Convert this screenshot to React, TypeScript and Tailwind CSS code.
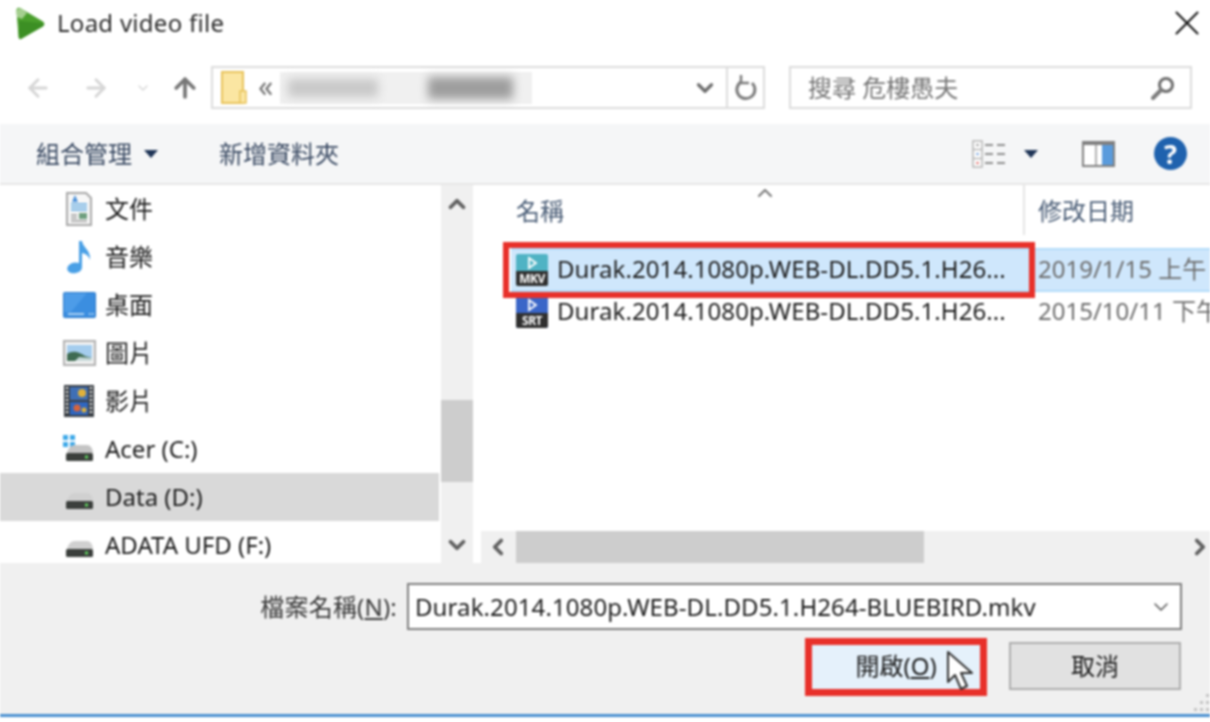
import { ArrowLeft, ArrowRight, ArrowUp, ChevronDown, ChevronUp, ChevronLeft, ChevronRight, X } from 'lucide-react';

function AppLogo() {
  return (
    <svg width="32" height="34" viewBox="0 0 32 34">
      <path d="M3 3 L5 30 Q5 33 8 31 L29 19 Q31 17 29 15 L7 2 Q3 0 3 3Z" fill="#4a9f2c" stroke="#4a9f2c" strokeLinejoin="round" />
      <path d="M5 14 L28 16 Q31 17 29 19 L8 31 Q5 33 5 30Z" fill="#3c8f24" />
      <path d="M2 3 L7 1 L13 6 L8 12 L3 10Z" fill="#a5cf8f" />
    </svg>
  );
}

function FolderIcon() {
  return (
    <svg width="26" height="34" viewBox="0 0 26 34">
      <rect x="1" y="1" width="21" height="31" fill="#fbe6a2" stroke="#e8c35c" strokeWidth="2" />
      <rect x="19" y="20" width="6" height="12" fill="#fbe6a2" stroke="#e8c35c" strokeWidth="1.5" />
    </svg>
  );
}

function RefreshIcon() {
  return (
    <svg width="24" height="28" viewBox="0 0 24 28" fill="none" stroke="#7d7d7d" strokeWidth="3">
      <path d="M7 8 A9 9 0 1 0 18 9" />
      <path d="M7 1 L7 9 L15 9" strokeWidth="2.5" />
    </svg>
  );
}

function SearchIcon() {
  return (
    <svg width="26" height="26" viewBox="0 0 26 26" fill="none">
      <circle cx="16" cy="10" r="6.5" stroke="#6e6e6e" strokeWidth="3" />
      <path d="M11 15 L3 23" stroke="#7d7d7d" strokeWidth="4" strokeLinecap="round" />
    </svg>
  );
}

function ViewIcon() {
  return (
    <svg width="34" height="28" viewBox="0 0 34 28">
      <rect x="1" y="1" width="9" height="26" fill="#fff" stroke="#b5b5b5" strokeWidth="1.5" />
      <path d="M1 9.5H10M1 18.5H10" stroke="#b5b5b5" strokeWidth="1.5" />
      <rect x="4.5" y="4" width="2" height="2" fill="#888" />
      <rect x="4.5" y="13" width="2" height="2" fill="#5b8fd6" />
      <rect x="4.5" y="22" width="2" height="2" fill="#d9534f" />
      <path d="M13 5H21M25 5H33M13 14H21M25 14H33M13 23H21M25 23H33" stroke="#8d8d8d" strokeWidth="2" />
    </svg>
  );
}

function PaneIcon() {
  return (
    <svg width="33" height="26" viewBox="0 0 33 26">
      <rect x="1" y="1" width="31" height="24" fill="#fff" stroke="#808080" strokeWidth="2" />
      <rect x="1" y="1" width="31" height="3" fill="#808080" />
      <rect x="13" y="4" width="2" height="20" fill="#b0b0b0" />
      <rect x="20" y="4" width="11" height="20" fill="#5a9bdc" />
    </svg>
  );
}

function HelpIcon() {
  return (
    <div className="w-[33px] h-[33px] rounded-full bg-[#1f62ae] flex items-center justify-center text-white text-[27px] font-bold leading-none">?</div>
  );
}

function Caret() {
  return <div className="w-0 h-0 border-l-[7px] border-r-[7px] border-t-[8px] border-l-transparent border-r-transparent border-t-[#1f3557]" />;
}

function DocIcon() {
  return (
    <svg width="26" height="34" viewBox="0 0 26 34">
      <path d="M1 1H20L25 6V33H1Z" fill="#f7f7f7" stroke="#a8a8a8" strokeWidth="2" />
      <path d="M6 10L9 3L12 10Z" fill="#4a90d9" />
      <path d="M5 12H21M5 15H21M5 18H21" stroke="#5aa5e0" strokeWidth="1.5" />
      <rect x="13" y="21" width="8" height="6" fill="#6f9f7f" />
      <path d="M5 23H11M5 26H11M5 29H21" stroke="#9a9a9a" strokeWidth="1.5" />
    </svg>
  );
}

function MusicIcon() {
  return (
    <svg width="26" height="34" viewBox="0 0 26 34">
      <path d="M13 1 L16 1 C17 8 25 10 24 20 C23 16 20 14 16 13 L16 27 C16 32 10 34 5 33 C1 32 0 28 3 25 C6 22 10 22 13 23Z" fill="#4aa0e6" />
    </svg>
  );
}

function DesktopIcon() {
  return (
    <svg width="33" height="26" viewBox="0 0 33 26">
      <rect x="0.5" y="0.5" width="32" height="25" rx="1" fill="#3b8ee0" stroke="#2a78c8" />
      <path d="M1 1H24L8 20H1Z" fill="#4d9ce8" />
      <path d="M5 22H21" stroke="#cfe6fa" strokeWidth="1.5" />
      <path d="M26 22H27.5M29 22H30.5" stroke="#e8f3fc" strokeWidth="1.5" />
    </svg>
  );
}

function PictureIcon() {
  return (
    <svg width="33" height="26" viewBox="0 0 33 26">
      <rect x="1" y="1" width="31" height="24" fill="#f3f3f3" stroke="#b0b0b0" strokeWidth="2" />
      <rect x="4" y="5" width="25" height="16" fill="#a5cdee" />
      <path d="M4 14 C10 10 16 12 22 16 L29 18 V21 H4Z" fill="#3f6b52" />
      <path d="M16 17 L29 18 V21 H12Z" fill="#c6d8d8" />
    </svg>
  );
}

function FilmIcon() {
  return (
    <svg width="30" height="32" viewBox="0 0 30 32">
      <rect x="0" y="0" width="30" height="32" fill="#3a3f45" />
      <path d="M3 2V30M27 2V30" stroke="#e5e5e5" strokeWidth="2.5" strokeDasharray="2 2" />
      <rect x="6" y="2" width="18" height="13" fill="#3f6fb5" />
      <rect x="6" y="17" width="18" height="13" fill="#2f66c0" />
      <circle cx="18" cy="8" r="4" fill="#e0b13a" />
      <circle cx="13" cy="23" r="3.5" fill="#d8643a" />
      <circle cx="20" cy="25" r="2.5" fill="#e0b13a" />
    </svg>
  );
}

function DriveIcon({ windows = false }: { windows?: boolean }) {
  return (
    <svg width="32" height="28" viewBox="0 0 32 28">
      {windows && (
        <g fill="#3fa9e8">
          <rect x="0" y="0" width="5" height="5" />
          <rect x="7" y="0" width="5" height="5" />
          <rect x="0" y="7" width="5" height="5" />
          <rect x="7" y="7" width="5" height="5" />
        </g>
      )}
      <path d="M4 18 Q6 10 12 10 H24 Q29 10 30 18Z" fill={windows ? '#c4c4c4' : '#d0d0d0'} />
      <rect x="3" y="18" width="27" height="8" rx="1.5" fill="#3b3f3c" />
      <rect x="22" y="20.5" width="3" height="3" fill="#5fcf5f" />
    </svg>
  );
}

function VideoFileIcon({ label, color }: { label: string; color: string }) {
  return (
    <div className="w-[32px] h-[32px] rounded-[2px] overflow-hidden flex flex-col shrink-0" style={{ backgroundColor: color }}>
      <div className="h-[17px] flex items-center justify-center">
        <svg width="11" height="14" viewBox="0 0 11 14" fill="none" stroke="#fff" strokeWidth="1.8">
          <path d="M2 2 L9 7 L2 12Z" />
        </svg>
      </div>
      <div className="h-[15px] bg-[#2f2f2f] text-white text-[12px] font-bold leading-[15px] text-center tracking-[-0.5px]">{label}</div>
    </div>
  );
}

function Cursor() {
  return (
    <svg width="30" height="42" viewBox="0 0 30 42">
      <path d="M2 2 L2 32 L9 25 L15 39 L21 36 L15 23 L26 23Z" fill="#fff" stroke="#333" strokeWidth="2" strokeLinejoin="round" />
    </svg>
  );
}

function ResizeGrip() {
  return (
    <svg width="16" height="18" viewBox="0 0 16 18" fill="#c4c4c4">
      <rect x="12" y="0" width="3" height="3" />
      <rect x="6" y="7" width="3" height="3" />
      <rect x="12" y="7" width="3" height="3" />
      <rect x="0" y="14" width="3" height="3" />
      <rect x="6" y="14" width="3" height="3" />
      <rect x="12" y="14" width="3" height="3" />
    </svg>
  );
}

const navItems = [
  { icon: <DocIcon />, label: '文件' },
  { icon: <MusicIcon />, label: '音樂' },
  { icon: <DesktopIcon />, label: '桌面' },
  { icon: <PictureIcon />, label: '圖片' },
  { icon: <FilmIcon />, label: '影片' },
  { icon: <DriveIcon windows />, label: 'Acer (C:)' },
  { icon: <DriveIcon />, label: 'Data (D:)', active: true },
  { icon: <DriveIcon />, label: 'ADATA UFD (F:)' },
];

const longName = 'Durak.2014.1080p.WEB-DL.DD5.1.H26...';

export default function App() {
  return (
    <div className="relative w-[1210px] h-[722px] overflow-hidden bg-white text-[24px] text-[#1c1c1c] blur-[0.8px] font-['Noto_Sans','Noto_Sans_CJK_TC',sans-serif]">
      {/* Title bar */}
      <div className="h-[48px] flex items-center pl-[14px] pr-[2px]">
        <AppLogo />
        <span className="ml-[11px] -mt-[3px] text-[#2b2b2b] tracking-[0.27px]">Load video file</span>
        <X className="ml-auto -mt-[2px] w-[42px] h-[42px] text-[#1a1a1a]" strokeWidth={1.2} />
      </div>

      {/* Navigation row */}
      <div className="h-[76px] flex items-start pt-[18px] pl-[24px]">
        <div className="flex items-center h-[43px] w-[187px] text-[#d6d6d6]">
          <ArrowLeft className="w-[28px] h-[28px]" strokeWidth={2.5} />
          <ArrowRight className="ml-[30px] w-[28px] h-[28px]" strokeWidth={2.5} />
          <ChevronDown className="ml-[25px] w-[16px] h-[16px]" strokeWidth={2} />
          <ArrowUp className="ml-[19px] w-[30px] h-[30px] text-[#777777]" strokeWidth={3} />
        </div>
        <div className="w-[554px] h-[43px] border-2 border-[#dcdcdc] flex items-center pl-[8px]">
          <FolderIcon />
          <span className="ml-[11px] -mt-[4px] text-[#777777] text-[30px] leading-none">«</span>
          <div className="ml-[7px] w-[252px] h-[32px] flex items-center bg-[#f0f0f0]">
            <div className="ml-[8px] w-[90px] h-[18px] bg-[#c8c8c8] blur-[5px]" />
            <div className="ml-[50px] w-[85px] h-[22px] bg-[#9d9d9d] blur-[5px]" />
          </div>
          <ChevronDown className="ml-auto mr-[8px] w-[26px] h-[26px] text-[#6e6e6e]" strokeWidth={3} />
          <div className="w-[37px] h-full border-l-2 border-[#dcdcdc] flex items-center justify-center">
            <RefreshIcon />
          </div>
        </div>
        <div className="ml-[24px] w-[403px] h-[43px] border-2 border-[#dcdcdc] flex items-center pl-[17px] pr-[14px] text-[#777777]">
          <span>搜尋 危樓愚夫</span>
          <div className="ml-auto"><SearchIcon /></div>
        </div>
      </div>

      {/* Toolbar */}
      <div className="h-[61px] bg-[#f5f6f7] border-b-2 border-[#e6e6e6] flex items-center pl-[36px] pr-[23px] text-[#3a4a63]">
        <span>組合管理</span>
        <div className="ml-[12px]"><Caret /></div>
        <span className="ml-[61px]">新增資料夾</span>
        <div className="ml-auto"><ViewIcon /></div>
        <div className="ml-[18px]"><Caret /></div>
        <div className="ml-[44px]"><PaneIcon /></div>
        <div className="ml-[39px]"><HelpIcon /></div>
      </div>

      {/* Main */}
      <div className="h-[378px] flex overflow-hidden">
        <div className="w-[439px] shrink-0">
          {navItems.map(item => (
            <div key={item.label} className={`h-[48px] flex items-center ${item.active ? 'bg-[#d9d9d9]' : ''}`}>
              <div className="ml-[62px] w-[34px] flex justify-center">{item.icon}</div>
              <span className="ml-[9px]">{item.label}</span>
            </div>
          ))}
        </div>
        <div className="ml-[2px] w-[32px] shrink-0 bg-[#f0f0f0] flex flex-col items-center relative">
          <ChevronUp className="mt-[6px] w-[26px] h-[26px] text-[#606060]" strokeWidth={3.5} />
          <div className="mt-[183px] w-full h-[82px] bg-[#cdcdcd]" />
          <ChevronDown className="mt-[50px] w-[26px] h-[26px] text-[#606060]" strokeWidth={3.5} />
        </div>

        {/* File list */}
        <div className="ml-[8px] flex-1 flex flex-col min-w-0">
          <div className="h-[50px] flex shrink-0 text-[#4c5f78]">
            <div className="w-[544px] border-r-2 border-[#e5e5e5] pl-[35px] pt-[8px] relative">
              <span>名稱</span>
              <ChevronUp className="absolute left-[272px] top-[-4px] w-[24px] h-[24px] text-[#777777]" strokeWidth={2} />
            </div>
            <div className="pl-[13px] pt-[8px]">修改日期</div>
          </div>
          <div className="mt-[13px] ml-[30px] h-[44px] flex items-center overflow-hidden bg-[#cfe7fc] border-y-2 border-[#b3dcfa] pl-[5px] whitespace-nowrap">
            <VideoFileIcon label="MKV" color="#4fb3c4" />
            <span className="ml-[9px] -mt-[2px] w-[481px] shrink-0 tracking-[0.08px]">{longName}</span>
            <span className="-mt-[2px] shrink-0 text-[#6d6d6d]">2019/1/15 上午</span>
          </div>
          <div className="ml-[30px] h-[40px] flex items-center overflow-hidden pl-[5px] whitespace-nowrap">
            <VideoFileIcon label="SRT" color="#3a66c8" />
            <span className="ml-[9px] -mt-[2px] w-[481px] shrink-0 tracking-[0.08px]">{longName}</span>
            <span className="-mt-[2px] shrink-0 text-[#6d6d6d]">2015/10/11 下午</span>
          </div>
          <div className="mt-auto h-[32px] shrink-0 bg-[#f0f0f0] flex items-center">
            <ChevronLeft className="ml-[4px] w-[26px] h-[26px] text-[#606060]" strokeWidth={3.5} />
            <div className="ml-[5px] w-[408px] h-full bg-[#cdcdcd]" />
            <ChevronRight className="ml-auto mr-[-3px] w-[26px] h-[26px] text-[#606060]" strokeWidth={3.5} />
          </div>
        </div>
      </div>

      {/* Footer */}
      <div className="h-[154px] bg-[#f0f0f0] border-b-[3px] border-[#4a90d0] pt-[20px] relative">
        <div className="flex items-center">
          <div className="w-[397px] text-right text-[#3a3a3a] tracking-[0.2px]">檔案名稱(<span className="underline">N</span>):</div>
          <div className="ml-[10px] w-[775px] h-[47px] bg-white border-2 border-[#7f7f7f] flex items-center pl-[6px]">
            <span className="tracking-[0.1px]">Durak.2014.1080p.WEB-DL.DD5.1.H264-BLUEBIRD.mkv</span>
            <ChevronDown className="ml-auto mr-[7px] w-[24px] h-[24px] text-[#555555]" strokeWidth={1.5} />
          </div>
        </div>
        <div className="mt-[12px] flex items-center">
          <div className="ml-[811px] w-[170px] h-[46px] bg-[#e5f1fb] flex items-center justify-center">
            <span>開啟(<span className="underline">O</span>)</span>
          </div>
          <div className="ml-[28px] w-[172px] h-[48px] bg-[#e1e1e1] border-2 border-[#adadad] flex items-center justify-center">取消</div>
        </div>
        <div className="absolute right-0 bottom-[2px]"><ResizeGrip /></div>
      </div>

      {/* Annotations drawn over the dialog */}
      <div className="absolute left-[503px] top-[242px] w-[532px] h-[56px] border-[6px] border-[#e8302a]" />
      <div className="absolute left-[805px] top-[638px] w-[182px] h-[58px] border-[7px] border-[#e8302a]" />
      <div className="absolute left-[946px] top-[650px]"><Cursor /></div>
    </div>
  );
}
